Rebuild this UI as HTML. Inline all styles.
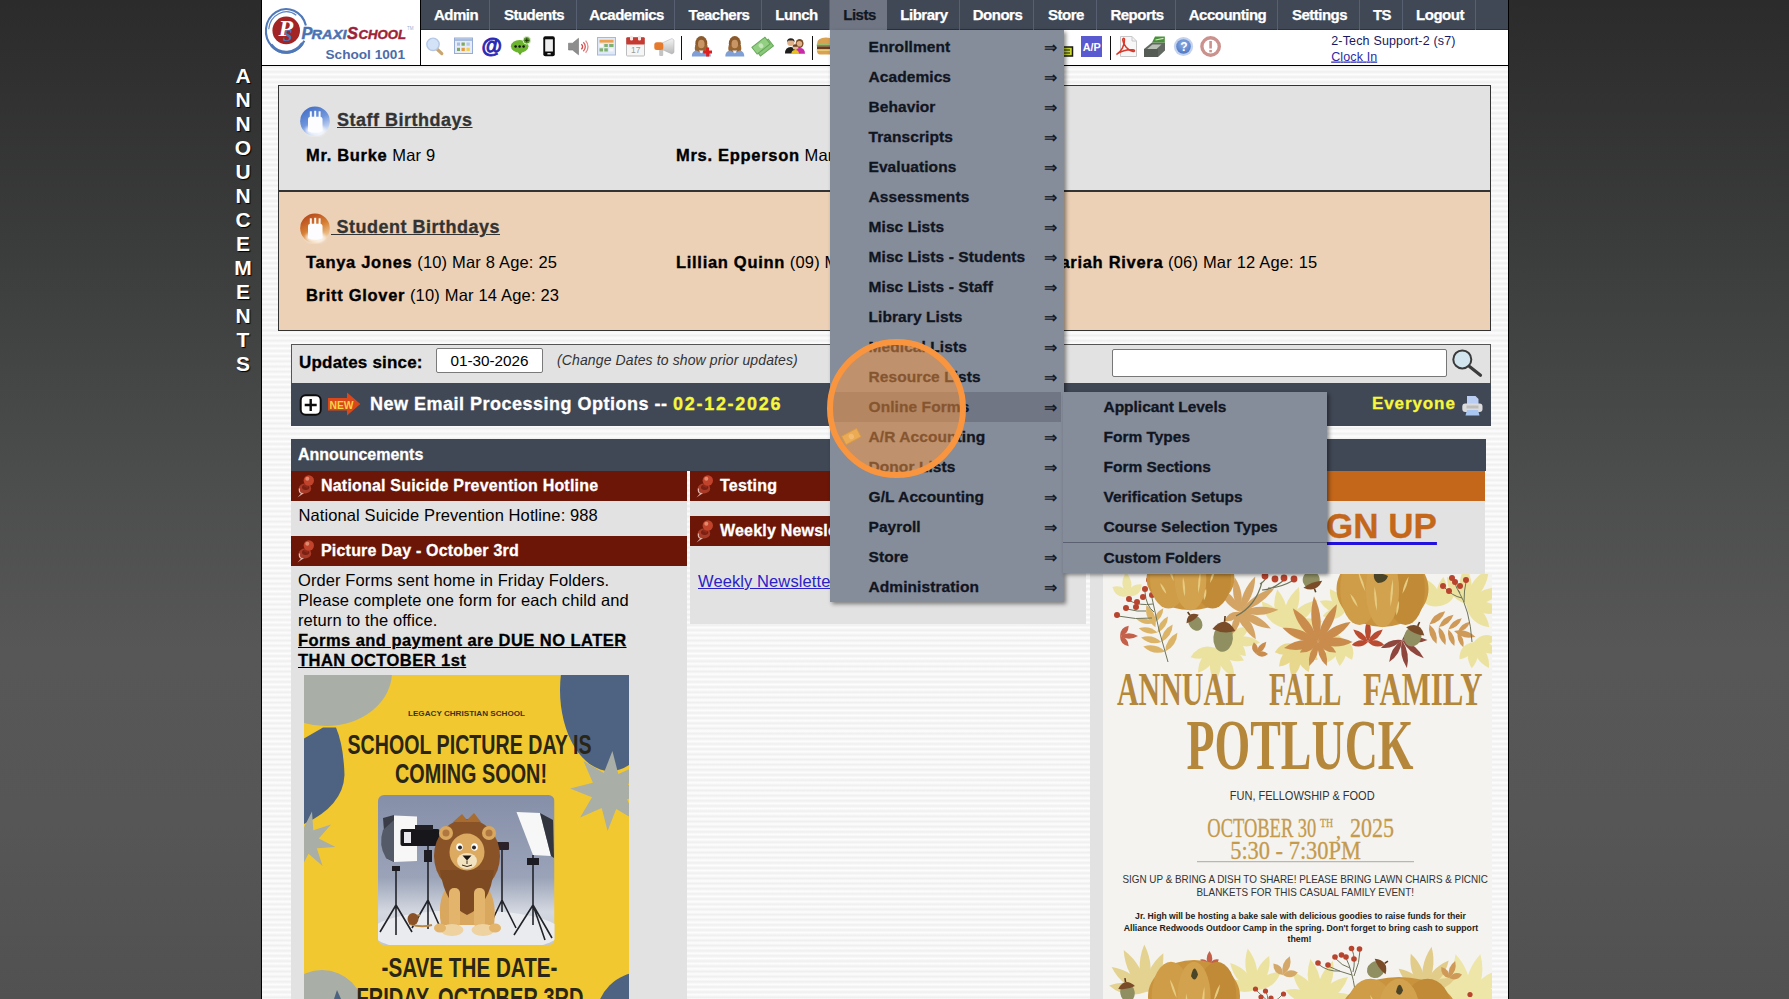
<!DOCTYPE html>
<html>
<head>
<meta charset="utf-8">
<title>PraxiSchool</title>
<style>
*{box-sizing:border-box;margin:0;padding:0}
html,body{width:1789px;height:999px;overflow:hidden}
body{font-family:"Liberation Sans",sans-serif;background:linear-gradient(#2b2b2b 0px,#2f2f2f 60px,#3b3c3c 250px,#4b4c4c 470px,#575757 650px,#565656 820px,#515151 999px);position:relative;color:#000}
.abs{position:absolute}
#page{position:absolute;left:261px;top:0;width:1248px;height:999px;border-left:1px solid #000;border-right:1px solid #000;background:repeating-linear-gradient(#fdfdfd 2.05px,#efefef 4.635px,#fdfdfd 7.22px);overflow:hidden}
/* vertical label */
#vlabel{position:absolute;left:232px;top:64px;width:22px;color:#fff;font-weight:bold;font-size:21px;line-height:24px;text-align:center;text-shadow:1px 1px 1px #000}
/* header */
#hdr{position:absolute;left:262px;top:0;width:1246px;height:65px;background:#fff}
#hdrline{position:absolute;left:262px;top:65px;width:1246px;height:1px;background:#000}
#logoline{position:absolute;left:420px;top:0;width:1px;height:65px;background:#000}
#nav{position:absolute;left:421px;top:0;width:1087px;height:30px;background:#404856;border-bottom:1px solid #2c313b}
.ni{position:absolute;top:0;height:30px;padding-left:2px;line-height:29px;color:#fff;font-weight:bold;font-size:15px;text-align:center;border-right:1px solid #566072;letter-spacing:-0.5px;-webkit-text-stroke:.25px #fff}
.ni.sel{background:#707684;color:#111722;border-right:none;-webkit-text-stroke:.25px #111722}
/* menu */
#menu{position:absolute;left:830px;top:30px;width:234px;height:572px;background:#858c9a;box-shadow:2px 2px 4px rgba(0,0,0,.45)}
.mi{position:absolute;left:0;width:231px;-webkit-text-stroke:.3px #10151f;height:30px;line-height:30px;padding-left:38.5px;font-weight:bold;font-size:15.5px;letter-spacing:.08px;color:#10151f;white-space:nowrap}
.mi .ar{position:absolute;left:214px;top:1px;font-weight:normal;font-size:16px;letter-spacing:0;-webkit-text-stroke:.2px #10151f}
.mi.hi{background:#707684}
#sub{position:absolute;left:1063px;top:392px;width:264px;height:181px;background:#858c9a;box-shadow:2px 2px 4px rgba(0,0,0,.45)}
.si{position:absolute;left:0;width:264px;-webkit-text-stroke:.3px #10151f;height:30px;line-height:30px;padding-left:40.5px;font-weight:bold;font-size:15.5px;letter-spacing:-.02px;color:#10151f;white-space:nowrap}
#circle{position:absolute;left:826.5px;top:338.5px;width:139px;height:139px;border-radius:50%;border:6px solid #f9953f;background:rgba(249,149,63,.5)}

/* content */
.t{position:absolute;white-space:nowrap}
.b{font-weight:bold;-webkit-text-stroke:.3px}
#bday{position:absolute;left:278px;top:85px;width:1213px;height:246px;border:1px solid #333;background:#e2e2e2}
#bday2{position:absolute;left:279px;top:190px;width:1211px;height:140px;background:#ecd1b6;border-top:2px solid #333}
.bh{font-size:18px;font-weight:bold;color:#333;text-decoration:underline;letter-spacing:.5px;-webkit-text-stroke:.3px #333}
.bn{font-size:16.5px;color:#000;letter-spacing:.18px}
.bn b{letter-spacing:.7px;-webkit-text-stroke:.35px}
#upd{position:absolute;left:291px;top:344px;width:1200px;height:39px;background:#e2e2e2;border:1px solid #555;border-bottom:none}
#news{position:absolute;left:291px;top:383px;width:1200px;height:42.5px;background:#404856}
#annh{position:absolute;left:291px;top:439px;width:1195px;height:32px;background:#404856}
.col{position:absolute;background:#e2e2e2}
.ah{position:absolute;height:30px;background:#6b1607;color:#fff;font-weight:bold;font-size:16px;line-height:29px;white-space:nowrap;letter-spacing:.2px;-webkit-text-stroke:.3px #fff}
.bt{font-size:16.5px;line-height:20px;color:#000;letter-spacing:.1px}
input{font-family:"Liberation Sans",sans-serif}
</style>
</head>
<body>
<div id="vlabel">A<br>N<br>N<br>O<br>U<br>N<br>C<br>E<br>M<br>E<br>N<br>T<br>S</div>
<div id="page"></div>
<div id="hdr"></div>
<div id="hdrline"></div>
<div id="logoline"></div>
<div id="nav">
<div class="ni" style="left:0px;width:69px">Admin</div>
<div class="ni" style="left:69px;width:87px">Students</div>
<div class="ni" style="left:156px;width:98px">Academics</div>
<div class="ni" style="left:254px;width:87px">Teachers</div>
<div class="ni" style="left:341px;width:68px">Lunch</div>
<div class="ni sel" style="left:409px;width:57px">Lists</div>
<div class="ni" style="left:466px;width:73px">Library</div>
<div class="ni" style="left:539px;width:74px">Donors</div>
<div class="ni" style="left:613px;width:63px">Store</div>
<div class="ni" style="left:676px;width:79px">Reports</div>
<div class="ni" style="left:755px;width:102px">Accounting</div>
<div class="ni" style="left:857px;width:82px">Settings</div>
<div class="ni" style="left:939px;width:43px">TS</div>
<div class="ni" style="left:982px;width:73px">Logout</div>
</div>


<svg class="abs" style="left:0;top:0" width="1789" height="68" viewBox="0 0 1789 68">
<defs><g id="wm"><ellipse cx="9.5" cy="7.5" rx="6" ry="7.5" fill="#8a5a2c"/><path d="M3.5 9 Q2 15 5 16 L14 16 Q17 15 15.5 9Z" fill="#96642f"/><ellipse cx="9.5" cy="8" rx="3.3" ry="4.3" fill="#c99564"/><path d="M0 20.5 Q0 15 5 14.5 L9.5 17 L14 14.5 Q19 15 19 20.5Z" fill="#7f9fd6"/><path d="M7 14.5 L9.5 17.5 L12 14.5Z" fill="#e8eef8"/></g>
<radialGradient id="gh" cx="50%" cy="35%" r="65%"><stop offset="0" stop-color="#8fb0e6"/><stop offset="1" stop-color="#4f78c4"/></radialGradient>
<linearGradient id="gcone" x1="0" y1="0" x2="0" y2="1"><stop offset="0" stop-color="#f4f4f4"/><stop offset="1" stop-color="#b8b8b8"/></linearGradient>
</defs>
<!-- logo -->
<g>
<path d="M305.9 25.6A20.3 21.8 0 1 0 304.3 40.8" fill="none" stroke="#4f78b8" stroke-width="2.1"/>
<path d="M296.3 15.3A17.6 19 0 0 0 268.7 29.2" fill="none" stroke="#5a84c4" stroke-width="1.2"/>
<path d="M302.5 43.1A19.9 21.3 0 0 1 271.0 44.6" fill="none" stroke="#4f78b8" stroke-width="3"/>
<circle cx="286.2" cy="30.4" r="13.8" fill="#a32424"/>
<text x="278.6" y="35.8" font-family="Liberation Serif" font-style="italic" font-weight="bold" font-size="24" fill="#fff">P</text>
<text x="283" y="41.2" font-family="Liberation Serif" font-style="italic" font-weight="bold" font-size="17" fill="#5076b8">S</text>
<text x="301.5" y="38.5" font-family="Liberation Sans" font-style="italic" font-weight="bold" font-size="16.5" fill="#4a72b2" stroke="#4a72b2" stroke-width=".4">P</text>
<text x="311.5" y="38.5" font-family="Liberation Sans" font-style="italic" font-weight="bold" font-size="12" fill="#4a72b2" stroke="#4a72b2" stroke-width=".4" textLength="35" lengthAdjust="spacingAndGlyphs">RAXI</text>
<text x="347" y="38.5" font-family="Liberation Sans" font-style="italic" font-weight="bold" font-size="16.5" fill="#9c2337" stroke="#9c2337" stroke-width=".4">S</text>
<text x="358.5" y="38.5" font-family="Liberation Sans" font-style="italic" font-weight="bold" font-size="12" fill="#9c2337" stroke="#9c2337" stroke-width=".4" textLength="47.5" lengthAdjust="spacingAndGlyphs">CHOOL</text>
<text x="407" y="29.5" font-family="Liberation Sans" font-size="4.5" fill="#9bb0d0">TM</text>
<text x="325.5" y="58.6" font-family="Liberation Sans" font-weight="bold" font-size="13" fill="#4c6ca8" textLength="79.5" lengthAdjust="spacingAndGlyphs">School 1001</text>
</g>
<!-- 1 magnifier -->
<line x1="437.5" y1="49.5" x2="441.8" y2="53.6" stroke="#c9a56f" stroke-width="3.2" stroke-linecap="round"/>
<circle cx="433" cy="44.3" r="6.2" fill="#d3e2f6" stroke="#b4c8e6" stroke-width="1.4"/>
<!-- 2 grid calendar -->
<rect x="454.5" y="38" width="18" height="15.5" fill="#e6edf8" stroke="#97acd4" stroke-width="1"/>
<rect x="455" y="38.5" width="17" height="2.5" fill="#a9bde0"/>
<rect x="457" y="42.5" width="3" height="3.2" fill="#a5bde2"/><rect x="461.5" y="42.5" width="3.3" height="3.2" fill="#7ea860"/><rect x="466.5" y="42.5" width="3.3" height="3.2" fill="#b6c9e6"/>
<rect x="457" y="47.8" width="3" height="3.2" fill="#7ea860"/><rect x="461.5" y="47.8" width="3.3" height="3.2" fill="#e79a3c"/><rect x="466.5" y="47.8" width="3.3" height="3.2" fill="#efd24e"/>
<!-- 3 at -->
<text x="481.5" y="53" font-family="Liberation Sans" font-weight="bold" font-size="21.5" fill="#2828b4" stroke="#2828b4" stroke-width=".8" textLength="20.5" lengthAdjust="spacingAndGlyphs">@</text>
<!-- 4 chat -->
<path d="M517 51 L520 55.3 L523 51Z" fill="#5fa828"/>
<ellipse cx="519.7" cy="46.3" rx="8.8" ry="6.3" fill="#6ab52d"/>
<circle cx="515.6" cy="46.6" r="1.25" fill="#111"/><circle cx="519.6" cy="46.6" r="1.25" fill="#111"/><circle cx="523.6" cy="46.6" r="1.25" fill="#111"/>
<circle cx="526.8" cy="40.3" r="3.8" fill="#5a9a2c" stroke="#e4f0d8" stroke-width="1"/>
<path d="M526.8 38.3V42.3M524.8 40.3H528.8" stroke="#1a2a10" stroke-width="1"/>
<!-- 5 phone -->
<rect x="543.3" y="36.3" width="11.5" height="20" rx="2" fill="#0c0c0c"/>
<rect x="545.2" y="39.3" width="7.7" height="12.2" fill="#eeeeee"/>
<rect x="547.3" y="53" width="3.5" height="1.6" rx=".6" fill="#ddd"/>
<!-- 6 speaker -->
<path d="M568.5 43.2H572.5L578.5 38.3V54.8L572.5 50H568.5Z" fill="#8d8d8d" stroke="#777" stroke-width=".6"/>
<path d="M581.3 44.3A3 3 0 0 1 581.3 49.2" fill="none" stroke="#d24a4a" stroke-width="1.4"/>
<path d="M583.3 42.3A6 6 0 0 1 583.3 51.2" fill="none" stroke="#d86060" stroke-width="1.4"/>
<path d="M585.6 40.6A9 9 0 0 1 585.6 52.8" fill="none" stroke="#e08a8a" stroke-width="1.3"/>
<!-- 7 calendar2 -->
<rect x="597.5" y="37.5" width="18" height="17.5" fill="#dfe8f6" stroke="#a4b8dc" stroke-width="1"/>
<rect x="599.5" y="39.8" width="14" height="2.8" fill="#f0a04c"/>
<rect x="599.5" y="44" width="3.5" height="3" fill="#f4f6fa"/><rect x="604.3" y="44" width="3.5" height="3" fill="#7fb070"/><rect x="609.2" y="44" width="4.3" height="3" fill="#7fb070"/>
<rect x="599.5" y="48.3" width="3.5" height="3.2" fill="#7fb070"/><rect x="604.3" y="48.3" width="3.5" height="3.2" fill="#7fb070"/><rect x="609.2" y="48.3" width="4.3" height="3.2" fill="#f4f6fa"/>
<!-- 8 date calendar -->
<rect x="626.5" y="38" width="18" height="18" rx="1" fill="#f6f6f6" stroke="#bdbdbd" stroke-width="1"/>
<rect x="626.3" y="37.3" width="18.4" height="7.2" rx="1" fill="#c63a32"/>
<rect x="630" y="35.8" width="3" height="4.6" rx="1.2" fill="#f4e4e2"/><rect x="638" y="35.8" width="3" height="4.6" rx="1.2" fill="#f4e4e2"/>
<text x="631" y="53.3" font-family="Liberation Sans" font-size="8.5" fill="#9a9a9a">17</text>
<!-- 9 megaphone -->
<rect x="659.2" y="49" width="4" height="7" rx="1" fill="#c4c4c4"/>
<path d="M662 43L672 38.5L674 40V52.5L672 54L662 49.5Z" fill="url(#gcone)" stroke="#aaa" stroke-width=".5"/>
<rect x="654.3" y="42.3" width="9" height="7.6" rx="2.5" fill="#e67a2c"/>
<!-- sep -->
<rect x="681" y="36" width="1" height="24" fill="#111"/>
<!-- 11 woman plus -->
<use href="#wm" x="691.8" y="36"/>
<path d="M707.6 47.6V56.4M703.2 52H712" stroke="#dc2020" stroke-width="3"/>
<!-- 12 woman -->
<use href="#wm" x="725.3" y="36"/>
<!-- 13 money -->
<g transform="rotate(-38 763 47)"><rect x="755.5" y="44" width="16.5" height="8.5" fill="#8cc87c" stroke="#64a857" stroke-width="1"/><rect x="754" y="40.5" width="16.5" height="8.5" fill="#93cf82" stroke="#64a857" stroke-width="1"/><ellipse cx="762.2" cy="44.8" rx="2.2" ry="2.6" fill="#c4e6ba"/></g>
<!-- 14 family -->
<circle cx="790.8" cy="42.5" r="3.6" fill="#e0b088"/><path d="M787 42A3.8 3.8 0 0 1 794.6 42L793 40.5H788.5Z" fill="#222"/>
<path d="M785 53.5Q785 47 790.8 47Q796.5 47 796.5 53.5Z" fill="#1c1c1c"/>
<ellipse cx="799.6" cy="43.5" rx="3.9" ry="4.6" fill="#7a4a22"/><circle cx="799.4" cy="43.8" r="2.8" fill="#e0b088"/>
<path d="M794.5 53.8Q794.5 48 799.8 48Q805 48 805 53.8Z" fill="#c62aa8"/>
<circle cx="795.2" cy="47.3" r="2.5" fill="#e6bc96"/><path d="M792.7 46.8A2.5 2.5 0 0 1 797.7 46.8Z" fill="#6a4020"/>
<path d="M791.3 54Q791.3 50 795.2 50Q799 50 799 54Z" fill="#e8c020"/>
<!-- sep -->
<rect x="812" y="36" width="1" height="24" fill="#111"/>
<!-- 16 burger -->
<path d="M817 44Q817 37.5 826 37.5Q835 37.5 835 44Z" fill="#d9a152"/>
<rect x="816.8" y="44.3" width="18.5" height="2" fill="#6ea030"/><rect x="817" y="46.3" width="18" height="3" fill="#6a3a1c"/><rect x="816.8" y="49" width="18.5" height="1.6" fill="#e8c030"/>
<path d="M817 50.8H835Q835 54.5 832 54.5H820Q817 54.5 817 50.8Z" fill="#d9a152"/>
<!-- yellow thing -->
<rect x="1058" y="47" width="14.5" height="9" fill="#c8d82e" stroke="#1a1a10" stroke-width="1.5"/>
<path d="M1062 50H1070M1062 53H1070" stroke="#1a1a10" stroke-width="1.2"/>
<!-- A/P -->
<rect x="1081" y="36" width="21" height="21" fill="#5a5ad0"/>
<text x="1082.7" y="50.5" font-family="Liberation Sans" font-weight="bold" font-size="10.5" fill="#fff" textLength="18" lengthAdjust="spacingAndGlyphs">A/P</text>
<rect x="1110" y="36" width="1" height="24" fill="#111"/>
<!-- pdf -->
<path d="M1120.5 36.5H1132L1136.5 41V56.5H1120.5Z" fill="#f7f7f7" stroke="#c8c8c8" stroke-width="1"/>
<path d="M1132 36.5V41H1136.5" fill="none" stroke="#c8c8c8" stroke-width="1"/>
<path d="M1116.5 54.5C1121 52 1125 45 1124.5 39.5C1124.3 37.8 1122.5 38 1122.7 40C1123.2 45 1128 50.5 1133 51.5C1135 51.8 1135 50 1133 49.8C1128 49.5 1121 51 1116.5 54.5Z" fill="none" stroke="#d63a2c" stroke-width="1.5"/>
<!-- register -->
<path d="M1144 49L1152 42.5L1165 42.5V50.5L1158 57H1144Z" fill="#626862"/>
<path d="M1146.5 49.5L1152.5 44.5H1161.5L1156 49.5Z" fill="#b9c0b4"/>
<path d="M1152 42.5L1155 36.5H1164.8V42.5Z" fill="#4a8f3a"/>
<path d="M1155.5 40L1163.5 38.3" stroke="#cfe8c4" stroke-width="1.2"/>
<path d="M1144 49H1158V57H1144Z" fill="#555b55"/>
<!-- help -->
<circle cx="1183.5" cy="46.5" r="9.6" fill="#c3d2ee"/>
<circle cx="1183.5" cy="46.5" r="7.3" fill="url(#gh)"/>
<text x="1180.2" y="51" font-family="Liberation Sans" font-weight="bold" font-size="12" fill="#fff">?</text>
<!-- alert -->
<circle cx="1210.6" cy="46.5" r="8.7" fill="#fff" stroke="#cb918d" stroke-width="3.4"/>
<rect x="1209.3" y="41" width="2.6" height="7.5" fill="#cb918d"/><rect x="1209.3" y="50" width="2.6" height="2.3" fill="#cb918d"/>
<!-- user -->
<text x="1331.2" y="44.6" font-family="Liberation Sans" font-size="12.5" fill="#1b1760" textLength="124.3" lengthAdjust="spacing">2-Tech Support-2 (s7)</text>
<text x="1331.2" y="60.5" font-family="Liberation Sans" font-size="12.5" fill="#2c2aa8" text-decoration="underline" textLength="46" lengthAdjust="spacing">Clock In</text>
</svg>
<div id="bday"></div>
<div id="bday2"></div>
<div class="t bh" style="left:337px;top:110px">Staff Birthdays</div>
<div class="t bn" style="left:306px;top:146px"><b>Mr. Burke</b> Mar 9</div>
<div class="t bn" style="left:676px;top:146px"><b>Mrs. Epperson</b> Mar 11</div>
<div class="t bh" style="left:331px;top:217px">&nbsp;Student Birthdays</div>
<div class="t bn" style="left:306px;top:253px"><b>Tanya Jones</b> (10) Mar 8 Age: 25</div>
<div class="t bn" style="left:676px;top:253px"><b>Lillian Quinn</b> (09) Mar 9 Age: 24</div>
<div class="t bn" style="left:1046px;top:253px"><b>Mariah Rivera</b> (06) Mar 12 Age: 15</div>
<div class="t bn" style="left:306px;top:286px"><b>Britt Glover</b> (10) Mar 14 Age: 23</div>

<div id="upd"></div>
<div class="t b" style="left:299px;top:353px;font-size:17px;letter-spacing:.2px">Updates since:</div>
<div class="abs" style="left:436px;top:348px;width:107px;height:25px;background:#fff;border:1px solid #7a7a7a;border-radius:2px;font-size:15.3px;line-height:23px;text-align:center">01-30-2026</div>
<div class="t" style="left:557px;top:352px;font-size:14px;letter-spacing:.12px;font-style:italic;color:#333">(Change Dates to show prior updates)</div>
<div class="abs" style="left:1112px;top:349px;width:335px;height:28px;background:#fff;border:1px solid #777;border-radius:2px"></div>
<div id="news"></div>
<div class="t b" style="left:370px;top:394px;font-size:18px;letter-spacing:.5px;color:#fff">New Email Processing Options -- <span style="color:#f7f73b;letter-spacing:1.7px">02-12-2026</span></div>
<div class="t b" style="left:1372px;top:393.5px;font-size:17px;letter-spacing:.9px;color:#f7f73b">Everyone</div>
<div id="annh"></div>
<div class="t b" style="left:298px;top:446px;font-size:16px;color:#fff">Announcements</div>

<div class="col" style="left:291px;top:471px;width:396px;height:528px"></div>
<div class="ah" style="left:291px;top:471px;width:396px;padding-left:30px">National Suicide Prevention Hotline</div>
<div class="t bt" style="left:298.5px;top:505px">National Suicide Prevention Hotline: 988</div>
<div class="ah" style="left:291px;top:536px;width:396px;padding-left:30px">Picture Day - October 3rd</div>
<div class="t bt" style="left:298px;top:570px">Order Forms sent home in Friday Folders.<br>Please complete one form for each child and<br>return to the office.<br><b style="letter-spacing:.45px;-webkit-text-stroke:.3px"><u>Forms and payment are DUE NO LATER<br>THAN OCTOBER 1st</u></b></div>
<!--POSTER1--><svg class="abs" style="left:304px;top:675px" width="325" height="324" viewBox="304 675 325 324">
<defs><linearGradient id="p1bg" x1="0" y1="0" x2="0" y2="1"><stop offset="0" stop-color="#858fa8"/><stop offset=".55" stop-color="#9aa3b8"/><stop offset=".78" stop-color="#d4d8e0"/><stop offset="1" stop-color="#c2c6d0"/></linearGradient>
<clipPath id="p1c"><rect x="378" y="795" width="176.5" height="150" rx="6"/></clipPath></defs>
<rect x="304" y="675" width="325" height="324" fill="#f2c830"/>
<path d="M304 738.5L323 727.5L336 727.5Q343.5 745 344.5 775Q343 806 304 824Z" fill="#4e6381"/>
<ellipse cx="326" cy="672" rx="66" ry="54" fill="#a9aea6"/>
<polygon points="335.4,847 316.8,848.3 322.6,866 308.5,853.8 300,870.4 298.7,851.8 281,857.6 293.2,843.5 276.6,835 295.2,833.7 289.4,816 303.5,828.2 312,811.6 313.3,830.2 331,824.4 318.8,838.5" fill="#a9aea6"/>
<ellipse cx="610" cy="690" rx="50" ry="81" fill="#4e6381"/>
<polygon points="649.9,793.4 627.1,799.3 636.5,820.9 616.2,809 607.6,830.9 601.7,808.1 580.1,817.5 592,797.2 570.1,788.6 592.9,782.7 583.5,761.1 603.8,773 612.4,751.1 618.3,773.9 639.9,764.5 628,784.8" fill="#a9aea6"/>
<circle cx="322" cy="1012" r="42" fill="#a9aea6"/>
<polygon points="334,999 337,990 341,999" fill="#4e6381"/>
<circle cx="642" cy="1018" r="46" fill="#4e6381"/>
<text x="466.5" y="716" text-anchor="middle" font-family="Liberation Sans" font-weight="bold" font-size="6.8" fill="#3a3420" textLength="117" lengthAdjust="spacingAndGlyphs">LEGACY CHRISTIAN SCHOOL</text>
<text x="347.5" y="753.5" font-family="Liberation Sans" font-weight="bold" font-size="28.5" fill="#2a2616" textLength="244" lengthAdjust="spacingAndGlyphs">SCHOOL PICTURE DAY IS</text>
<text x="395" y="782.5" font-family="Liberation Sans" font-weight="bold" font-size="28.5" fill="#2a2616" textLength="152" lengthAdjust="spacingAndGlyphs">COMING SOON!</text>
<text x="381.5" y="977" font-family="Liberation Sans" font-weight="bold" font-size="28.5" fill="#2a2616" textLength="176" lengthAdjust="spacingAndGlyphs">-SAVE THE DATE-</text>
<text x="356.5" y="1006.5" font-family="Liberation Sans" font-weight="bold" font-size="28.5" fill="#2a2616" textLength="227" lengthAdjust="spacingAndGlyphs">FRIDAY, OCTOBER 3RD</text>
<g clip-path="url(#p1c)">
<rect x="378" y="795" width="176.5" height="150" fill="url(#p1bg)"/>
<ellipse cx="466" cy="932" rx="95" ry="22" fill="#e9ebef"/>
<!-- left softbox -->
<path d="M383 818L394 815L394 862L386 858Z" fill="#3a3d48"/>
<path d="M394 815.5L417 816.5L417 861L394 862Z" fill="#f7f7f7"/>
<path d="M383 830Q378 845 386 858L394 862V820Z" fill="#555a68"/>
<!-- right softbox -->
<path d="M516.5 812L540 813L551 856L533 855Z" fill="#f7f7f7"/>
<path d="M540 813L553 820L554 858L551 856Z" fill="#33353e"/>
<!-- camera -->
<rect x="400.5" y="829" width="39" height="17" rx="2" fill="#17171b"/>
<rect x="415" y="825" width="18" height="5" fill="#202026"/>
<rect x="404" y="832" width="7" height="11" fill="#e8e8ee"/>
<!-- stands -->
<g stroke="#23242a" stroke-width="1.6" fill="none">
<path d="M428 846V929M428 900L412 928M428 900L440 927"/>
<path d="M396 870V912M396 905L380 932M396 905L412 932M396 905V935"/>
<path d="M533 855V925M533 905L514 935M533 905L552 938M533 905L545 940"/>
<path d="M502 850V912M502 900L490 925M502 900L516 928"/>
</g>
<rect x="424" y="850" width="8" height="12" fill="#1c1c22"/>
<rect x="392" y="866" width="8" height="5" fill="#1c1c22"/>
<rect x="496" y="842" width="13" height="8" rx="1" fill="#2a2228"/>
<rect x="527" y="858" width="12" height="7" fill="#1c1c22"/>
<!-- lion -->
<path d="M420 915Q408 918 410 924Q420 928 432 925" fill="none" stroke="#b98844" stroke-width="2"/>
<ellipse cx="413" cy="919" rx="5.5" ry="6" fill="#8a5226"/>
<path d="M441 925Q436 895 452 882L482 882Q498 895 494 925Z" fill="#d9a75e"/>
<ellipse cx="467" cy="856" rx="33" ry="37" fill="#8a5327"/>
<path d="M440 870Q445 905 467 915Q490 905 494 870Z" fill="#7e4a22"/>
<circle cx="446" cy="833" r="7" fill="#d9a75e"/><circle cx="489" cy="833" r="7" fill="#d9a75e"/>
<circle cx="446" cy="833" r="3.5" fill="#b07840"/><circle cx="489" cy="833" r="3.5" fill="#b07840"/>
<path d="M453 822L462 814L467 820L474 813L481 822Z" fill="#a86c30"/>
<ellipse cx="467" cy="852" rx="17.5" ry="18.5" fill="#dcaa60"/>
<ellipse cx="467" cy="861" rx="10" ry="8" fill="#f2e2c0"/>
<ellipse cx="459.5" cy="847" rx="3.3" ry="3.8" fill="#fff"/><ellipse cx="474.5" cy="847" rx="3.3" ry="3.8" fill="#fff"/>
<circle cx="460" cy="847.5" r="2" fill="#2a2a2a"/><circle cx="474" cy="847.5" r="2" fill="#2a2a2a"/>
<path d="M462.5 855.5H471.5L467 860.5Z" fill="#1a1612"/>
<path d="M467 860.5V864M462 865Q467 868 472 865" fill="none" stroke="#3a2a1a" stroke-width="1"/>
<rect x="449" y="888" width="11" height="40" rx="5" fill="#e2b46c"/><rect x="474" y="888" width="11" height="40" rx="5" fill="#e2b46c"/>
<ellipse cx="452" cy="930" rx="11.5" ry="6" fill="#eed2a0"/><ellipse cx="483" cy="930" rx="11.5" ry="6" fill="#eed2a0"/>
<ellipse cx="440" cy="928" rx="6" ry="4.5" fill="#e2b46c"/><ellipse cx="495" cy="928" rx="6" ry="4.5" fill="#e2b46c"/>
</g>
</svg>
<!--/POSTER1-->
<div class="col" style="left:690px;top:471px;width:396px;height:153px"></div>
<div class="ah" style="left:690px;top:471px;width:396px;padding-left:30px">Testing</div>
<div class="ah" style="left:690px;top:516px;width:396px;padding-left:30px">Weekly Newsletter</div>
<div class="t bt" style="left:698px;top:571px;color:#2a22c8;text-decoration:underline">Weekly Newsletter</div>

<div class="col" style="left:1090px;top:471px;width:395px;height:528px"></div>
<div class="ah" style="left:1090px;top:471px;width:395px;background:#c4671b"></div>
<div class="t b" style="left:1293px;top:506px;font-size:35px;color:#c4671b;text-decoration:underline;text-decoration-color:#2211dd;text-decoration-thickness:3px;text-underline-offset:4px">SIGN UP</div>
<!--POSTER2--><svg class="abs" style="left:1103px;top:574px" width="389" height="425" viewBox="1103 574 389 425">
<rect x="1103" y="574" width="389" height="425" fill="#f4f3ef"/>
<path d="M1128 596Q1124.7 583.7 1112.4 587Q1115.7 599.3 1128 596Z" fill="#ece4a4"/><path d="M1128 596Q1135.9 583.3 1125.9 572.1Q1118 584.8 1128 596Z" fill="#ece4a4"/><path d="M1128 596Q1140.7 597.1 1141.8 584.4Q1129.1 583.3 1128 596Z" fill="#ece4a4"/><path d="M1216 648Q1231.2 656.5 1242.6 643.3Q1227.4 634.8 1216 648Z" fill="#ece2a0"/><path d="M1216 648Q1225.5 664.3 1244 660.4Q1234.5 644.2 1216 648Z" fill="#ece2a0"/><path d="M1216 648Q1215.7 668.3 1234.1 677Q1234.4 656.7 1216 648Z" fill="#ece2a0"/><path d="M1216 648Q1204.4 664.7 1214.8 682.2Q1226.4 665.5 1216 648Z" fill="#ece2a0"/><path d="M1216 648Q1198.1 653.9 1198 672.8Q1215.9 666.8 1216 648Z" fill="#ece2a0"/><path d="M1216 648Q1199.6 642.3 1190.6 657.2Q1207.1 663 1216 648Z" fill="#ece2a0"/><path d="M1230 640Q1245 641.7 1248.4 627.1Q1233.5 625.4 1230 640Z" fill="#ece2a0"/><path d="M1230 640Q1244.1 651.3 1259.9 642.6Q1245.8 631.3 1230 640Z" fill="#ece2a0"/><path d="M1230 640Q1230.9 655 1245.9 655.9Q1245 640.9 1230 640Z" fill="#ece2a0"/><path d="M1284 628Q1282.1 607.1 1261.8 601.6Q1263.7 622.5 1284 628Z" fill="#ece2a0"/><path d="M1284 628Q1292.4 606.7 1277.2 589.5Q1268.8 610.8 1284 628Z" fill="#ece2a0"/><path d="M1284 628Q1302.7 611.6 1298.9 586.9Q1280.2 603.4 1284 628Z" fill="#ece2a0"/><path d="M1284 628Q1308.5 623.1 1317.5 599.9Q1293 604.8 1284 628Z" fill="#ece2a0"/><path d="M1284 628Q1305.3 636.4 1322.5 621.2Q1301.2 612.8 1284 628Z" fill="#ece2a0"/><path d="M1284 628Q1296.1 645.2 1316.4 639.8Q1304.3 622.6 1284 628Z" fill="#ece2a0"/><path d="M1298 646Q1301.5 661.9 1317.7 659.8Q1314.1 643.9 1298 646Z" fill="#e8d88e"/><path d="M1298 646Q1293.2 663.1 1308.7 671.9Q1313.5 654.7 1298 646Z" fill="#e8d88e"/><path d="M1298 646Q1284.4 659.8 1292.4 677.5Q1306.1 663.7 1298 646Z" fill="#e8d88e"/><path d="M1298 646Q1280.4 648.9 1279.1 666.6Q1296.7 663.8 1298 646Z" fill="#e8d88e"/><path d="M1298 646Q1283.6 638.5 1274.8 652.2Q1289.3 659.7 1298 646Z" fill="#e8d88e"/><path d="M1342 638Q1337.1 653.5 1352.1 659.8Q1357 644.2 1342 638Z" fill="#ece2a0"/><path d="M1342 638Q1329.8 651 1339.6 665.9Q1351.7 652.9 1342 638Z" fill="#ece2a0"/><path d="M1342 638Q1323.8 644.8 1323.6 664.2Q1341.8 657.4 1342 638Z" fill="#ece2a0"/><path d="M1342 638Q1324.7 633.9 1316.6 649.8Q1334 653.9 1342 638Z" fill="#ece2a0"/><path d="M1342 638Q1331 626 1318.1 635.9Q1329.1 647.9 1342 638Z" fill="#ece2a0"/><path d="M1345 612Q1332.2 604.1 1322.8 615.9Q1335.7 623.8 1345 612Z" fill="#ece2a0"/><path d="M1345 612Q1336.3 597.4 1319.7 601.1Q1328.4 615.7 1345 612Z" fill="#ece2a0"/><path d="M1345 612Q1345.8 595 1329.9 589Q1329.1 606 1345 612Z" fill="#ece2a0"/><path d="M1345 612Q1355 600.8 1345 589.5Q1335 600.8 1345 612Z" fill="#ece2a0"/><path d="M1466 604Q1466.4 583.6 1447.1 577Q1446.7 597.4 1466 604Z" fill="#ece2a0"/><path d="M1466 604Q1477.7 585.1 1465.3 566.6Q1453.7 585.5 1466 604Z" fill="#ece2a0"/><path d="M1466 604Q1487.4 593 1488.8 568.9Q1467.3 579.9 1466 604Z" fill="#ece2a0"/><path d="M1466 604Q1489.9 606.9 1504.5 587.7Q1480.5 584.8 1466 604Z" fill="#ece2a0"/><path d="M1466 604Q1482.1 619.3 1502.7 611.1Q1486.6 595.8 1466 604Z" fill="#ece2a0"/><path d="M1466 604Q1469.2 624.2 1489.3 627.3Q1486.2 607.2 1466 604Z" fill="#ece2a0"/><path d="M1474 642Q1486.8 649.9 1496.2 638.1Q1483.3 630.2 1474 642Z" fill="#ece2a0"/><path d="M1474 642Q1481.7 656.6 1497.8 653.1Q1490.1 638.5 1474 642Z" fill="#ece2a0"/><path d="M1474 642Q1472.8 660 1489 668Q1490.2 650 1474 642Z" fill="#ece2a0"/><path d="M1474 642Q1462.9 654.2 1471.7 668.2Q1482.8 655.9 1474 642Z" fill="#ece2a0"/><path d="M1474 642Q1459.1 644.2 1459.5 659.2Q1474.4 657 1474 642Z" fill="#ece2a0"/><path d="M1440 606Q1434.6 591.3 1419.2 594Q1424.6 608.7 1440 606Z" fill="#ece2a0"/><path d="M1440 606Q1442.4 588.4 1426.8 579.8Q1424.5 597.4 1440 606Z" fill="#ece2a0"/><path d="M1440 606Q1451.6 592.6 1443.4 576.9Q1431.8 590.3 1440 606Z" fill="#ece2a0"/><path d="M1440 606Q1455.4 603.2 1455.4 587.6Q1440.1 590.4 1440 606Z" fill="#ece2a0"/><path d="M1165.2 651.5Q1155.8 642.5 1143.3 646.5Q1152.7 655.6 1165.2 651.5Z" fill="#dcb468"/><path d="M1165.2 651.5Q1176.9 645.8 1177.4 632.7Q1165.6 638.5 1165.2 651.5Z" fill="#dcb468"/><path d="M1161.3 642Q1152.6 633.6 1141.1 637.4Q1149.8 645.8 1161.3 642Z" fill="#dcb468"/><path d="M1161.3 642Q1172.2 636.7 1172.7 624.6Q1161.8 629.9 1161.3 642Z" fill="#dcb468"/><path d="M1157.5 632.6Q1149.5 624.8 1138.8 628.2Q1146.9 636 1157.5 632.6Z" fill="#dcb468"/><path d="M1157.5 632.6Q1167.6 627.7 1168 616.5Q1157.9 621.4 1157.5 632.6Z" fill="#dcb468"/><path d="M1153.7 623.1Q1146.3 616 1136.5 619.1Q1143.9 626.3 1153.7 623.1Z" fill="#dcb468"/><path d="M1153.7 623.1Q1162.9 618.6 1163.3 608.3Q1154 612.8 1153.7 623.1Z" fill="#dcb468"/><path d="M1155.4 627.3Q1157.6 613.5 1146.4 605.1Q1144.2 618.9 1155.4 627.3Z" fill="#dcb468"/><path d="M1240 612Q1236 594.8 1219.8 587.9Q1223.7 605.1 1240 612Z" fill="#d4a464"/><path d="M1240 612Q1245.4 593.5 1234.9 577.4Q1229.5 595.8 1240 612Z" fill="#d4a464"/><path d="M1240 612Q1255 597.5 1255.2 576.6Q1240.3 591.2 1240 612Z" fill="#d4a464"/><path d="M1240 612Q1261.8 606.5 1274.4 587.9Q1252.6 593.4 1240 612Z" fill="#d4a464"/><path d="M1240 612Q1259.7 618.9 1278.4 609.8Q1258.8 602.9 1240 612Z" fill="#d4a464"/><path d="M1240 612Q1251.6 627.3 1270.8 628.6Q1259.2 613.3 1240 612Z" fill="#d4a464"/><path d="M1240 612Q1240.9 629.6 1255.8 639.3Q1254.8 621.6 1240 612Z" fill="#d4a464"/><path d="M1240 612Q1236.5 622.9 1246.2 628.9Q1249.7 618.1 1240 612Z" fill="#d4a464"/><path d="M1240 612Q1229.3 620.9 1231.8 634.6Q1242.5 625.7 1240 612Z" fill="#d4a464"/><path d="M1240 612Q1228.7 610.4 1224.4 621Q1235.7 622.6 1240 612Z" fill="#d4a464"/><path d="M1318 642Q1299.4 636.1 1284 648Q1302.6 653.9 1318 642Z" fill="#c98c4c"/><path d="M1318 642Q1303.5 626.6 1282.4 627.8Q1296.9 643.3 1318 642Z" fill="#c98c4c"/><path d="M1318 642Q1312.6 619.7 1292.8 608.2Q1298.2 630.5 1318 642Z" fill="#c98c4c"/><path d="M1318 642Q1325 618.3 1314 596.2Q1307 619.9 1318 642Z" fill="#c98c4c"/><path d="M1318 642Q1335.5 627.2 1336.9 604.3Q1319.4 619.1 1318 642Z" fill="#c98c4c"/><path d="M1318 642Q1339 639.6 1350.6 621.9Q1329.6 624.3 1318 642Z" fill="#c98c4c"/><path d="M1318 642Q1335.2 651 1352.5 642Q1335.2 633 1318 642Z" fill="#c98c4c"/><path d="M1318 642Q1323.6 653.3 1336.2 652.5Q1330.6 641.2 1318 642Z" fill="#c98c4c"/><path d="M1318 642Q1315.8 656.5 1326.8 666.1Q1329 651.7 1318 642Z" fill="#c98c4c"/><path d="M1318 642Q1307 651.7 1309.2 666.1Q1320.2 656.5 1318 642Z" fill="#c98c4c"/><path d="M1318 642Q1305.4 641.2 1299.8 652.5Q1312.4 653.3 1318 642Z" fill="#c98c4c"/><path d="M1429.4 624.5Q1441.3 622.7 1445.2 611.3Q1433.3 613.2 1429.4 624.5Z" fill="#cf9a58"/><path d="M1429.4 624.5Q1427.2 636.3 1436.5 643.8Q1438.7 632.1 1429.4 624.5Z" fill="#cf9a58"/><path d="M1438.9 627.1Q1449.9 625.3 1453.5 614.8Q1442.5 616.6 1438.9 627.1Z" fill="#cf9a58"/><path d="M1438.9 627.1Q1436.8 638 1445.4 645Q1447.5 634.1 1438.9 627.1Z" fill="#cf9a58"/><path d="M1448.3 629.6Q1458.5 628 1461.8 618.3Q1451.7 619.9 1448.3 629.6Z" fill="#cf9a58"/><path d="M1448.3 629.6Q1446.4 639.7 1454.4 646.1Q1456.3 636.1 1448.3 629.6Z" fill="#cf9a58"/><path d="M1457.8 632.1Q1467.1 630.6 1470.1 621.8Q1460.8 623.2 1457.8 632.1Z" fill="#cf9a58"/><path d="M1457.8 632.1Q1456 641.4 1463.3 647.3Q1465.1 638 1457.8 632.1Z" fill="#cf9a58"/><path d="M1454 631.1Q1462.9 640.3 1475.3 636.8Q1466.3 627.6 1454 631.1Z" fill="#cf9a58"/><path d="M1256 654Q1260.4 647.1 1253.9 642.2Q1249.5 649 1256 654Z" fill="#c98c4c"/><path d="M1256 654Q1265.4 651.4 1266.3 641.7Q1256.9 644.3 1256 654Z" fill="#c98c4c"/><path d="M1256 654Q1262 659.5 1268 654Q1262 648.5 1256 654Z" fill="#c98c4c"/><path d="M1120 636Q1128.6 634.4 1128.7 625.7Q1120.1 627.3 1120 636Z" fill="#c4604a"/><path d="M1120 636Q1129 641.5 1138 636Q1129 630.5 1120 636Z" fill="#c4604a"/><path d="M1120 636Q1120.1 644.7 1128.7 646.3Q1128.6 637.6 1120 636Z" fill="#c4604a"/><path d="M1368 642Q1358.8 637.5 1351.8 644.9Q1360.9 649.3 1368 642Z" fill="#ba4a30"/><path d="M1368 642Q1364.5 631.2 1353.3 629.6Q1356.8 640.4 1368 642Z" fill="#ba4a30"/><path d="M1368 642Q1374 631 1368 620Q1362 631 1368 642Z" fill="#ba4a30"/><path d="M1368 642Q1379.2 640.4 1382.7 629.6Q1371.5 631.2 1368 642Z" fill="#ba4a30"/><path d="M1368 642Q1375.1 649.3 1384.2 644.9Q1377.2 637.5 1368 642Z" fill="#ba4a30"/><path d="M1402 640Q1414.5 637.4 1419.2 625.5Q1406.8 628.2 1402 640Z" fill="#8f463c"/><path d="M1402 640Q1414.8 646 1427.5 640Q1414.8 634 1402 640Z" fill="#8f463c"/><path d="M1402 640Q1409.1 653.8 1423.8 658.3Q1416.8 644.6 1402 640Z" fill="#8f463c"/><path d="M1402 640Q1398.6 655.1 1406.9 668.1Q1410.4 653 1402 640Z" fill="#8f463c"/><path d="M1402 640Q1390.4 648 1389.2 662.1Q1400.8 654 1402 640Z" fill="#8f463c"/><path d="M1402 640Q1389.4 638.2 1380.9 647.7Q1393.5 649.5 1402 640Z" fill="#8f463c"/><path d="M1168 662Q1158 630 1152 598M1154 612Q1146 606 1145 592M1153 604Q1140 606 1130 601M1152 618Q1136 620 1118 616M1146 611Q1138 612 1127 609" fill="none" stroke="#6f7458" stroke-width="1"/><circle cx="1149" cy="580" r="3" fill="#b8442e"/><circle cx="1145" cy="589" r="3" fill="#b8442e"/><circle cx="1129" cy="599" r="3" fill="#b8442e"/><circle cx="1137" cy="602" r="3" fill="#b8442e"/><circle cx="1143" cy="597" r="3" fill="#b8442e"/><circle cx="1152" cy="595" r="3" fill="#b8442e"/><circle cx="1126" cy="608" r="3" fill="#b8442e"/><circle cx="1117" cy="615" r="3" fill="#b8442e"/><circle cx="1136" cy="607" r="3" fill="#b8442e"/><path d="M1236 616Q1256 606 1262 582M1262 590Q1272 590 1284 580M1260 584Q1266 580 1266 577M1268 588Q1280 588 1294 580" fill="none" stroke="#6f7458" stroke-width="1.2"/><circle cx="1265" cy="576" r="3.4" fill="#b8442e"/><circle cx="1275" cy="579" r="3.4" fill="#b8442e"/><circle cx="1284" cy="578" r="3.4" fill="#b8442e"/><circle cx="1294" cy="579" r="3.4" fill="#b8442e"/><path d="M1472 642Q1470 610 1458 590M1462 598Q1452 596 1444 587M1464 602Q1464 590 1466 582M1460 593Q1456 588 1455 583" fill="none" stroke="#6f7458" stroke-width="1"/><circle cx="1443" cy="586" r="3" fill="#b8442e"/><circle cx="1449" cy="591" r="3" fill="#b8442e"/><circle cx="1455" cy="582" r="3" fill="#b8442e"/><circle cx="1460" cy="586" r="3" fill="#b8442e"/><circle cx="1466" cy="580" r="3" fill="#b8442e"/><circle cx="1452" cy="578" r="3" fill="#b8442e"/><ellipse cx="1190.5" cy="579" rx="44" ry="31" fill="#c9933d"/><ellipse cx="1168.5" cy="579" rx="18.5" ry="29.4" fill="#cf9c48"/><ellipse cx="1212.5" cy="579" rx="18.5" ry="29.4" fill="#c08a36"/><ellipse cx="1190.5" cy="580" rx="15.8" ry="30.4" fill="#d3a24e"/><path d="M1167.7 564.6Q1168.6 573.6 1173.7 581Q1172.8 572 1167.7 564.6Z" fill="#e6cc80"/><path d="M1183 576.9Q1181.7 586.9 1184.8 596.6Q1186.1 586.6 1183 576.9Z" fill="#e6cc80"/><path d="M1200.3 571Q1197.1 581.9 1198.3 593.2Q1201.5 582.3 1200.3 571Z" fill="#e6cc80"/><path d="M1215 568.9Q1210.4 575.1 1210 582.9Q1214.6 576.7 1215 568.9Z" fill="#e6cc80"/><path d="M1160.1 582.9Q1161.3 589.4 1166.3 593.7Q1165.1 587.2 1160.1 582.9Z" fill="#e6cc80"/><path d="M1206.1 588.4Q1202.9 594.1 1203.9 600.6Q1207.2 594.9 1206.1 588.4Z" fill="#e6cc80"/><ellipse cx="1382.5" cy="589" rx="46" ry="38" fill="#c9933d"/><ellipse cx="1359.5" cy="589" rx="19.3" ry="36.1" fill="#cf9c48"/><ellipse cx="1405.5" cy="589" rx="19.3" ry="36.1" fill="#c08a36"/><ellipse cx="1382.5" cy="590" rx="16.6" ry="37.2" fill="#d3a24e"/><path d="M1358.2 571.4Q1359.7 582.2 1365.4 591.4Q1363.9 580.6 1358.2 571.4Z" fill="#e6cc80"/><path d="M1374.5 586.4Q1373.4 598.7 1376.7 610.6Q1377.8 598.3 1374.5 586.4Z" fill="#e6cc80"/><path d="M1392.9 579.2Q1389.5 592.6 1390.5 606.4Q1393.9 593 1392.9 579.2Z" fill="#e6cc80"/><path d="M1408.6 576.6Q1403.4 584.4 1402.4 593.8Q1407.6 586 1408.6 576.6Z" fill="#e6cc80"/><path d="M1350.2 593.8Q1352.1 601.5 1357.8 607Q1355.9 599.3 1350.2 593.8Z" fill="#e6cc80"/><path d="M1399 600.5Q1395.5 607.6 1396.4 615.5Q1399.8 608.4 1399 600.5Z" fill="#e6cc80"/><path d="M1374 574Q1380 572 1388 576Q1386 583 1378 583Q1373 580 1374 574Z" fill="#4a4428"/><g transform="rotate(-35 1194 621)"><ellipse cx="1194" cy="623.4" rx="6.4" ry="8.4" fill="#8f8f62"/><path d="M1186.5 618.6Q1194 608.6 1201.5 618.6Q1194 621.4 1186.5 618.6Z" fill="#7a4c28"/><rect x="1193.2" y="610" width="1.6" height="3.6" fill="#5a3a20"/></g><g transform="rotate(5 1223.5 634)"><ellipse cx="1223.5" cy="637.96" rx="9.8" ry="13.9" fill="#8f8f62"/><path d="M1212 630Q1223.5 613.5 1235 630Q1223.5 634.7 1212 630Z" fill="#7a4c28"/><rect x="1222.7" y="615.9" width="1.6" height="5.9" fill="#5a3a20"/></g><g transform="rotate(160 1312 582)"><ellipse cx="1312" cy="584.4" rx="8.5" ry="8.4" fill="#8f8f62"/><path d="M1302 579.6Q1312 569.6 1322 579.6Q1312 582.4 1302 579.6Z" fill="#7a4c28"/><rect x="1311.2" y="571" width="1.6" height="3.6" fill="#5a3a20"/></g><g transform="rotate(25 1414 634)"><ellipse cx="1414" cy="636.88" rx="8.5" ry="10.1" fill="#8f8f62"/><path d="M1404 631.1Q1414 619.1 1424 631.1Q1414 634.5 1404 631.1Z" fill="#7a4c28"/><rect x="1413.2" y="620.8" width="1.6" height="4.3" fill="#5a3a20"/></g><path d="M1146 992Q1129.4 977.9 1109.1 985.5Q1125.6 999.6 1146 992Z" fill="#e4d290"/><path d="M1146 992Q1135.3 970.6 1111.6 967Q1122.3 988.4 1146 992Z" fill="#e4d290"/><path d="M1146 992Q1144.6 965.9 1123.7 950.1Q1125.1 976.2 1146 992Z" fill="#e4d290"/><path d="M1146 992Q1156.2 967.9 1144.3 944.5Q1134.2 968.6 1146 992Z" fill="#e4d290"/><path d="M1146 992Q1164.7 977.1 1163.3 953.2Q1144.6 968.1 1146 992Z" fill="#e4d290"/><path d="M1146 992Q1167.4 988.4 1174.7 967.9Q1153.3 971.5 1146 992Z" fill="#e4d290"/><path d="M1255 990Q1242.6 975.3 1224.6 981.8Q1236.9 996.5 1255 990Z" fill="#ece2a0"/><path d="M1255 990Q1250.7 969 1230.2 962.9Q1234.5 983.9 1255 990Z" fill="#ece2a0"/><path d="M1255 990Q1262.2 967.4 1247.7 948.6Q1240.5 971.2 1255 990Z" fill="#ece2a0"/><path d="M1255 990Q1272.2 977.2 1269.1 956Q1251.9 968.8 1255 990Z" fill="#ece2a0"/><path d="M1255 990Q1274.2 990 1280.8 971.9Q1261.6 972 1255 990Z" fill="#ece2a0"/><path d="M1318 1002Q1305.9 984.8 1285.6 990.2Q1297.7 1007.4 1318 1002Z" fill="#ece2a0"/><path d="M1318 1002Q1314.6 979.3 1292.9 972Q1296.2 994.7 1318 1002Z" fill="#ece2a0"/><path d="M1318 1002Q1326 978.4 1310.4 959Q1302.4 982.6 1318 1002Z" fill="#ece2a0"/><path d="M1318 1002Q1336.7 985.6 1332.9 960.9Q1314.2 977.4 1318 1002Z" fill="#ece2a0"/><path d="M1318 1002Q1340.7 998.6 1348 976.9Q1325.3 980.2 1318 1002Z" fill="#ece2a0"/><path d="M1318 1002Q1337.1 1010.8 1352 996Q1332.9 987.2 1318 1002Z" fill="#ece2a0"/><path d="M1468 1004Q1453.8 983.9 1429.9 990.1Q1444.2 1010.2 1468 1004Z" fill="#eee6a8"/><path d="M1468 1004Q1463 977.6 1437.3 969.9Q1442.2 996.3 1468 1004Z" fill="#eee6a8"/><path d="M1468 1004Q1475.4 975.7 1455.6 954.2Q1448.2 982.5 1468 1004Z" fill="#eee6a8"/><path d="M1468 1004Q1487.8 982.5 1480.4 954.2Q1460.6 975.7 1468 1004Z" fill="#eee6a8"/><path d="M1468 1004Q1493.8 996.3 1498.7 969.9Q1473 977.6 1468 1004Z" fill="#eee6a8"/><path d="M1468 1004Q1491.8 1010.2 1506.1 990.1Q1482.2 983.9 1468 1004Z" fill="#eee6a8"/><path d="M1424 990Q1417.8 971.7 1398.7 968.8Q1404.9 987.1 1424 990Z" fill="#e2cc8a"/><path d="M1424 990Q1426.8 968.5 1410.8 953.8Q1408 975.3 1424 990Z" fill="#e2cc8a"/><path d="M1424 990Q1437.7 970.1 1431.6 946.7Q1418 966.6 1424 990Z" fill="#e2cc8a"/><path d="M1424 990Q1444 981.7 1448.7 960.5Q1428.7 968.8 1424 990Z" fill="#e2cc8a"/><path d="M1424 990Q1442.9 993.8 1455 978.7Q1436.1 975 1424 990Z" fill="#e2cc8a"/><path d="M1449 978Q1450 969 1441.3 966.9Q1440.2 975.9 1449 978Z" fill="#cf9a58"/><path d="M1449 978Q1457.7 971.6 1455.2 961.1Q1446.4 967.5 1449 978Z" fill="#cf9a58"/><path d="M1449 978Q1457.1 982 1462 974.5Q1454 970.5 1449 978Z" fill="#cf9a58"/><path d="M1283 975Q1283.5 964.8 1273.4 963.5Q1272.8 973.8 1283 975Z" fill="#d4a868"/><path d="M1283 975Q1293 968 1289.8 956.2Q1279.8 963.2 1283 975Z" fill="#d4a868"/><path d="M1283 975Q1291.6 980.6 1297.8 972.4Q1289.2 966.8 1283 975Z" fill="#d4a868"/><path d="M1209.5 966Q1208 958.3 1200.3 959.5Q1201.7 967.3 1209.5 966Z" fill="#c4604a"/><path d="M1209.5 966Q1215 958.5 1209.5 951Q1204 958.5 1209.5 966Z" fill="#c4604a"/><path d="M1209.5 966Q1217.3 967.3 1218.7 959.5Q1211 958.3 1209.5 966Z" fill="#c4604a"/><path d="M1355 990Q1352 970 1346 958M1352 975Q1340 972 1328 966M1350 968Q1342 966 1335 958M1353 972Q1356 960 1352 949M1354 976Q1360 962 1360 950M1340 971Q1328 972 1318 964" fill="none" stroke="#6f7458" stroke-width="1"/><circle cx="1318" cy="963" r="2.8" fill="#b8442e"/><circle cx="1328" cy="965" r="2.8" fill="#b8442e"/><circle cx="1335" cy="957" r="2.8" fill="#b8442e"/><circle cx="1341.5" cy="955" r="2.8" fill="#b8442e"/><circle cx="1346" cy="957" r="2.8" fill="#b8442e"/><circle cx="1351.5" cy="948.5" r="2.8" fill="#b8442e"/><circle cx="1359.5" cy="949" r="2.8" fill="#b8442e"/><circle cx="1354" cy="959" r="2.8" fill="#b8442e"/><path d="M1270 1003Q1262 996 1255 989M1268 1001Q1268 995 1265.5 991M1272 1003Q1280 998 1283 994" fill="none" stroke="#6f7458" stroke-width="0.9"/><circle cx="1255.5" cy="989" r="2.6" fill="#b8442e"/><circle cx="1265.5" cy="991" r="2.6" fill="#b8442e"/><circle cx="1283.5" cy="994" r="2.6" fill="#b8442e"/><circle cx="1261" cy="997" r="2.6" fill="#b8442e"/><circle cx="1271" cy="998" r="2.6" fill="#b8442e"/><circle cx="1470" cy="994.5" r="2.6" fill="#b8442e"/><ellipse cx="1194" cy="996" rx="46" ry="36" fill="#c9933d"/><ellipse cx="1171" cy="996" rx="19.3" ry="34.2" fill="#cf9c48"/><ellipse cx="1217" cy="996" rx="19.3" ry="34.2" fill="#c08a36"/><ellipse cx="1194" cy="997" rx="16.6" ry="35.3" fill="#d3a24e"/><path d="M1169.9 979.3Q1171.2 989.6 1176.7 998.3Q1175.4 988 1169.9 979.3Z" fill="#e6cc80"/><path d="M1186.1 993.5Q1184.9 1005.2 1188.1 1016.5Q1189.3 1004.8 1186.1 993.5Z" fill="#e6cc80"/><path d="M1204.3 986.7Q1201 999.4 1202.1 1012.5Q1205.4 999.8 1204.3 986.7Z" fill="#e6cc80"/><path d="M1220 984.3Q1214.9 991.6 1214 1000.5Q1219.1 993.2 1220 984.3Z" fill="#e6cc80"/><path d="M1161.9 1000.6Q1163.6 1007.9 1169.1 1013Q1167.4 1005.7 1161.9 1000.6Z" fill="#e6cc80"/><path d="M1210.4 1006.9Q1207 1013.6 1207.9 1021.1Q1211.3 1014.4 1210.4 1006.9Z" fill="#e6cc80"/><path d="M1191 976.2Q1194 961.8 1198 974.4Q1195 983.4 1191 976.2Z" fill="#4a4428"/><ellipse cx="1399" cy="1010" rx="57" ry="33" fill="#c9933d"/><ellipse cx="1370.5" cy="1010" rx="23.9" ry="31.3" fill="#cf9c48"/><ellipse cx="1427.5" cy="1010" rx="23.9" ry="31.3" fill="#c08a36"/><ellipse cx="1399" cy="1011" rx="20.5" ry="32.3" fill="#d3a24e"/><path d="M1370.2 994.7Q1371.3 1004.2 1376.5 1012.1Q1375.4 1002.6 1370.2 994.7Z" fill="#e6cc80"/><path d="M1389.5 1007.7Q1388.3 1018.4 1391.4 1028.8Q1392.6 1018.1 1389.5 1007.7Z" fill="#e6cc80"/><path d="M1411.4 1001.5Q1408.2 1013.1 1409.4 1025.1Q1412.6 1013.5 1411.4 1001.5Z" fill="#e6cc80"/><path d="M1430.2 999.3Q1425.4 1005.9 1424.8 1014.1Q1429.6 1007.5 1430.2 999.3Z" fill="#e6cc80"/><path d="M1360.4 1014.2Q1361.8 1021 1367 1025.6Q1365.6 1018.8 1360.4 1014.2Z" fill="#e6cc80"/><path d="M1419 1020Q1415.6 1026.1 1416.7 1033Q1420 1026.9 1419 1020Z" fill="#e6cc80"/><path d="M1396 991.9Q1399 978.6 1403 990.2Q1400 998.5 1396 991.9Z" fill="#4a4428"/><g transform="rotate(-10 1127 990)"><ellipse cx="1127" cy="992.64" rx="7.2" ry="9.2" fill="#8f8f62"/><path d="M1118.5 987.4Q1127 976.4 1135.5 987.4Q1127 990.4 1118.5 987.4Z" fill="#7a4c28"/><rect x="1126.2" y="977.9" width="1.6" height="4" fill="#5a3a20"/></g><g transform="rotate(55 1378 968)"><ellipse cx="1378" cy="970.64" rx="8.1" ry="9.2" fill="#8f8f62"/><path d="M1368.5 965.4Q1378 954.4 1387.5 965.4Q1378 968.4 1368.5 965.4Z" fill="#7a4c28"/><rect x="1377.2" y="955.9" width="1.6" height="4" fill="#5a3a20"/></g>
<g font-family="Liberation Serif" font-weight="bold" fill="#b5873a">
<text x="1117" y="705.2" font-size="46" textLength="128" lengthAdjust="spacingAndGlyphs">ANNUAL</text>
<text x="1269" y="705.2" font-size="46" textLength="72.5" lengthAdjust="spacingAndGlyphs">FALL</text>
<text x="1363" y="705.2" font-size="46" textLength="119.5" lengthAdjust="spacingAndGlyphs">FAMILY</text>
<text x="1186.5" y="769.4" font-size="71" textLength="227" lengthAdjust="spacingAndGlyphs">POTLUCK</text>
</g>
<g font-family="Liberation Serif" fill="#c49a4c" stroke="#c49a4c" stroke-width=".3">
<text x="1207.3" y="836.8" font-size="28" textLength="109" lengthAdjust="spacingAndGlyphs">OCTOBER 30</text>
<text x="1320" y="827" font-size="13" textLength="13" lengthAdjust="spacingAndGlyphs">TH</text>
<text x="1336" y="838" font-size="20">,</text>
<text x="1350" y="836.8" font-size="28" textLength="44" lengthAdjust="spacingAndGlyphs">2025</text>
<text x="1230.2" y="858.5" font-size="26" textLength="130.7" lengthAdjust="spacingAndGlyphs">5:30 - 7:30PM</text>
</g>
<rect x="1197" y="861.2" width="217" height="1" fill="#a8a8a8"/>
<g font-family="Liberation Sans" fill="#333">
<text x="1229.8" y="800.3" font-size="12" textLength="144.8" lengthAdjust="spacingAndGlyphs">FUN, FELLOWSHIP &amp; FOOD</text>
<text x="1122.5" y="882.8" font-size="10.5" textLength="365.5" lengthAdjust="spacingAndGlyphs">SIGN UP &amp; BRING A DISH TO SHARE! PLEASE BRING LAWN CHAIRS &amp; PICNIC</text>
<text x="1196.5" y="895.8" font-size="10.5" textLength="217.5" lengthAdjust="spacingAndGlyphs">BLANKETS FOR THIS CASUAL FAMILY EVENT!</text>
</g>
<g font-family="Liberation Sans" font-weight="bold" fill="#222">
<text x="1135.1" y="919.4" font-size="8.6" textLength="330.7" lengthAdjust="spacingAndGlyphs">Jr. High will be hosting a bake sale with delicious goodies to raise funds for their</text>
<text x="1123.7" y="931.3" font-size="8.6" textLength="354.5" lengthAdjust="spacingAndGlyphs">Alliance Redwoods Outdoor Camp in the spring. Don't forget to bring cash to support</text>
<text x="1287.5" y="942.3" font-size="8.6" textLength="24" lengthAdjust="spacingAndGlyphs">them!</text>
</g>
</svg>
<!--/POSTER2-->


<svg class="abs" style="left:0;top:68px" width="1789" height="931" viewBox="0 68 1789 931">
<defs>
<linearGradient id="gb1" x1=".2" y1="0" x2=".7" y2="1"><stop offset="0" stop-color="#3f6cc4"/><stop offset=".5" stop-color="#6f95dc"/><stop offset=".85" stop-color="#c4d4f2"/><stop offset="1" stop-color="#eef2fb"/></linearGradient><filter id="bl"><feGaussianBlur stdDeviation="1.6"/></filter>
<linearGradient id="gb2" x1=".2" y1="0" x2=".7" y2="1"><stop offset="0" stop-color="#b3421a"/><stop offset=".5" stop-color="#d67f34"/><stop offset=".85" stop-color="#ecc08a"/><stop offset="1" stop-color="#f8e8d4"/></linearGradient>
</defs>
<circle cx="315" cy="121.3" r="14.8" fill="url(#gb1)"/><ellipse cx="315.5" cy="130.3" rx="10" ry="5.5" fill="#fff" opacity=".75" filter="url(#bl)"/><path d="M308 119.3Q308 116.8 310.5 116.8H320Q322.5 116.8 322.5 119.3V131.3Q315 134.3 308 131.3Z" fill="#fdfdff"/><rect x="309.8" y="111.3" width="2" height="6" fill="#fff" opacity=".95"/><rect x="314.2" y="110.8" width="2" height="6.5" fill="#fff" opacity=".95"/><rect x="318.6" y="111.3" width="2" height="6" fill="#fff" opacity=".95"/>
<circle cx="315" cy="228.3" r="14.8" fill="url(#gb2)"/><ellipse cx="315.5" cy="237.3" rx="10" ry="5.5" fill="#fff" opacity=".75" filter="url(#bl)"/><path d="M308 226.3Q308 223.8 310.5 223.8H320Q322.5 223.8 322.5 226.3V238.3Q315 241.3 308 238.3Z" fill="#fdfdff"/><rect x="309.8" y="218.3" width="2" height="6" fill="#fff" opacity=".95"/><rect x="314.2" y="217.8" width="2" height="6.5" fill="#fff" opacity=".95"/><rect x="318.6" y="218.3" width="2" height="6" fill="#fff" opacity=".95"/>
<!-- plus -->
<rect x="300.7" y="395.2" width="20" height="19.6" rx="5" fill="#fff" stroke="#0c0c0c" stroke-width="2"/>
<path d="M310.7 399V411M304.7 405H316.7" stroke="#0c0c0c" stroke-width="2.4"/>
<!-- NEW arrow -->
<path d="M328 398H347V392.5L360.3 404L347 415.4V410.5H328Z" fill="#d9481b"/>
<text x="329.5" y="409" font-family="Liberation Sans" font-weight="bold" font-size="11" fill="#f9d445" textLength="24" lengthAdjust="spacingAndGlyphs">NEW</text>
<!-- search magnifier -->
<line x1="1469.5" y1="366.5" x2="1480.5" y2="375.3" stroke="#3c3c3c" stroke-width="3.2" stroke-linecap="round"/>
<circle cx="1462.3" cy="359.4" r="9" fill="#d2e6f0" stroke="#3a3a3a" stroke-width="2"/>
<!-- printer -->
<path d="M1467 396H1475.5L1478.5 399V405H1467Z" fill="#b9cef2"/>
<rect x="1462.3" y="403.5" width="20.2" height="8.5" rx="3" fill="#dcdcdc"/>
<rect x="1466.5" y="405.5" width="12" height="3" fill="#bdbdbd"/>
<path d="M1467 410H1478L1479.5 415.6H1465.5Z" fill="#a9c6f0"/>
<!-- pins -->
<g transform="translate(296 472)"><path d="M8.5 17.5L1.5 25.5L10.5 19.5Z" fill="#d8b0a8"/><ellipse cx="9" cy="16.5" rx="6.2" ry="5" fill="#a83a28"/><ellipse cx="9.6" cy="15.3" rx="3.6" ry="2.6" fill="#7a2014"/><path d="M7.5 14L11 8.5L14.5 11L11.5 16Z" fill="#8e2a1a"/><circle cx="12.8" cy="8.5" r="5.2" fill="#c2432c"/><circle cx="11.3" cy="6.8" r="2" fill="#e08a70"/><path d="M3.5 16.5Q2.5 20.5 6 21.5" fill="none" stroke="#e4b8ac" stroke-width="1.3"/></g><g transform="translate(296 537)"><path d="M8.5 17.5L1.5 25.5L10.5 19.5Z" fill="#d8b0a8"/><ellipse cx="9" cy="16.5" rx="6.2" ry="5" fill="#a83a28"/><ellipse cx="9.6" cy="15.3" rx="3.6" ry="2.6" fill="#7a2014"/><path d="M7.5 14L11 8.5L14.5 11L11.5 16Z" fill="#8e2a1a"/><circle cx="12.8" cy="8.5" r="5.2" fill="#c2432c"/><circle cx="11.3" cy="6.8" r="2" fill="#e08a70"/><path d="M3.5 16.5Q2.5 20.5 6 21.5" fill="none" stroke="#e4b8ac" stroke-width="1.3"/></g><g transform="translate(695 472)"><path d="M8.5 17.5L1.5 25.5L10.5 19.5Z" fill="#d8b0a8"/><ellipse cx="9" cy="16.5" rx="6.2" ry="5" fill="#a83a28"/><ellipse cx="9.6" cy="15.3" rx="3.6" ry="2.6" fill="#7a2014"/><path d="M7.5 14L11 8.5L14.5 11L11.5 16Z" fill="#8e2a1a"/><circle cx="12.8" cy="8.5" r="5.2" fill="#c2432c"/><circle cx="11.3" cy="6.8" r="2" fill="#e08a70"/><path d="M3.5 16.5Q2.5 20.5 6 21.5" fill="none" stroke="#e4b8ac" stroke-width="1.3"/></g><g transform="translate(695 517)"><path d="M8.5 17.5L1.5 25.5L10.5 19.5Z" fill="#d8b0a8"/><ellipse cx="9" cy="16.5" rx="6.2" ry="5" fill="#a83a28"/><ellipse cx="9.6" cy="15.3" rx="3.6" ry="2.6" fill="#7a2014"/><path d="M7.5 14L11 8.5L14.5 11L11.5 16Z" fill="#8e2a1a"/><circle cx="12.8" cy="8.5" r="5.2" fill="#c2432c"/><circle cx="11.3" cy="6.8" r="2" fill="#e08a70"/><path d="M3.5 16.5Q2.5 20.5 6 21.5" fill="none" stroke="#e4b8ac" stroke-width="1.3"/></g>
</svg>
<div id="menu">
<div class="mi" style="top:2px">Enrollment<span class="ar">&#8658;</span></div>
<div class="mi" style="top:32px">Academics<span class="ar">&#8658;</span></div>
<div class="mi" style="top:62px">Behavior<span class="ar">&#8658;</span></div>
<div class="mi" style="top:92px">Transcripts<span class="ar">&#8658;</span></div>
<div class="mi" style="top:122px">Evaluations<span class="ar">&#8658;</span></div>
<div class="mi" style="top:152px">Assessments<span class="ar">&#8658;</span></div>
<div class="mi" style="top:182px">Misc Lists<span class="ar">&#8658;</span></div>
<div class="mi" style="top:212px">Misc Lists - Students<span class="ar">&#8658;</span></div>
<div class="mi" style="top:242px">Misc Lists - Staff<span class="ar">&#8658;</span></div>
<div class="mi" style="top:272px">Library Lists<span class="ar">&#8658;</span></div>
<div class="mi" style="top:302px">Medical Lists<span class="ar">&#8658;</span></div>
<div class="mi" style="top:332px">Resource Lists<span class="ar">&#8658;</span></div>
<div class="mi hi" style="top:362px">Online Forms<span class="ar">&#8658;</span></div>
<div class="mi" style="top:392px">A/R Accounting<span class="ar">&#8658;</span></div>
<div class="mi" style="top:422px">Donor Lists<span class="ar">&#8658;</span></div>
<div class="mi" style="top:452px">G/L Accounting<span class="ar">&#8658;</span></div>
<div class="mi" style="top:482px">Payroll<span class="ar">&#8658;</span></div>
<div class="mi" style="top:512px">Store<span class="ar">&#8658;</span></div>
<div class="mi" style="top:542px">Administration<span class="ar">&#8658;</span></div>
</div>
<div id="sub">
<div class="si" style="top:0px">Applicant Levels</div>
<div class="si" style="top:30px">Form Types</div>
<div class="si" style="top:60px">Form Sections</div>
<div class="si" style="top:90px">Verification Setups</div>
<div class="si" style="top:120px">Course Selection Types</div>
<div class="abs" style="left:0;top:150px;width:264px;height:1px;background:#5b6170"></div>
<div class="si" style="top:151px">Custom Folders</div>
</div>
<svg class="abs" style="left:840px;top:426px" width="24" height="22" viewBox="0 0 24 22"><g transform="rotate(-28 11 11)"><rect x="3" y="6" width="17" height="9.5" fill="#dcc068" stroke="#b89a48" stroke-width=".8"/><ellipse cx="11.5" cy="10.8" rx="2.6" ry="2.8" fill="#efe0a0"/></g></svg>
<div id="circle"></div>

</body>
</html>
